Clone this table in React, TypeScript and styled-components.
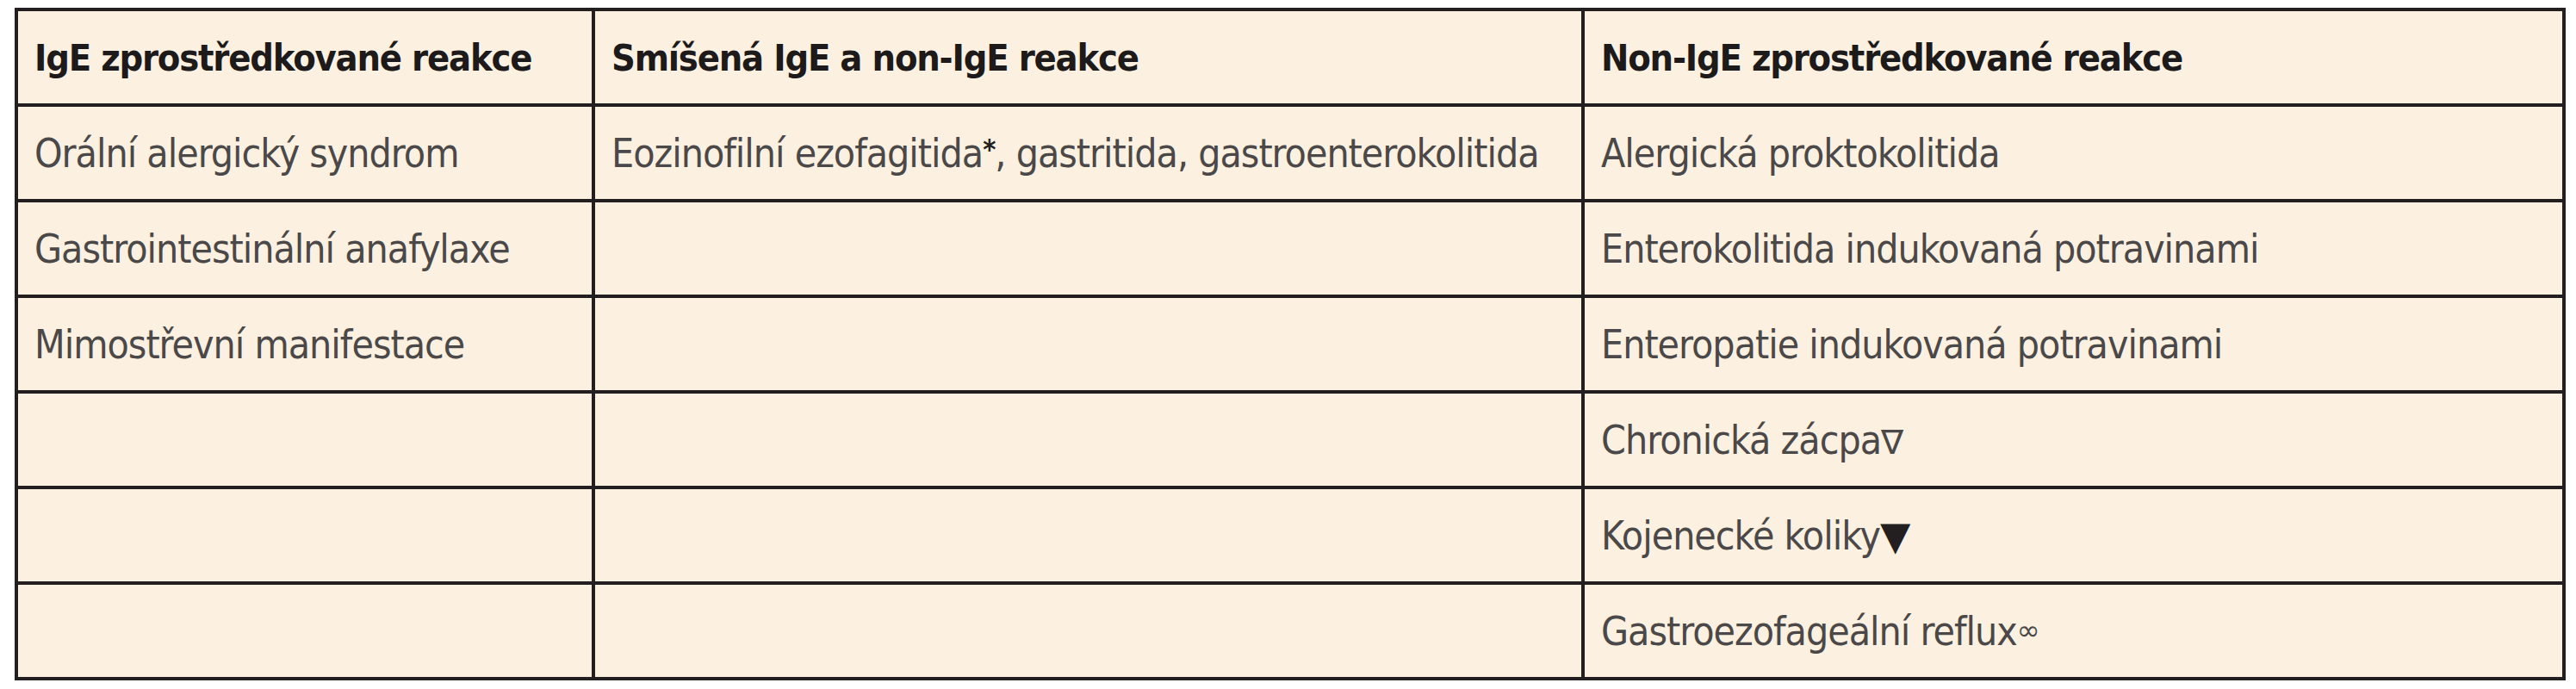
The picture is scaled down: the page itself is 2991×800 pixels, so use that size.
import React from 'react'
import styled, { createGlobalStyle } from 'styled-components'

const GlobalStyle = createGlobalStyle`
  html, body {
    margin: 0;
    padding: 0;
    background: #ffffff;
  }
`

const Page = styled.div`
  padding: 9px 12px 0 17px;
`

const Table = styled.table`
  width: 2962px;
  table-layout: fixed;
  border-collapse: collapse;
  background: #fcf0e0;
  font-family: 'DejaVu Sans Condensed', 'DejaVu Sans', sans-serif;

  tr {
    height: 111px;
  }
`

const HeadCell = styled.th`
  border: 4px solid #231f20;
  padding: 0 0 0 19px;
  text-align: left;
  vertical-align: middle;
  font-size: 43px;
  letter-spacing: -1.2px;
  font-weight: 700;
  color: #1c1a1a;
  white-space: nowrap;
`

const Cell = styled.td`
  border: 4px solid #231f20;
  padding: 0 0 0 19px;
  vertical-align: middle;
  font-size: 46px;
  letter-spacing: -1px;
  font-weight: 400;
  color: #4a4848;
  white-space: nowrap;
`

const Star = styled.span`
  font-weight: 700;
  color: #231f20;
  vertical-align: 0.3em;
  font-size: 0.7em;
`

const Mark = styled.span<{ $dark?: boolean }>`
  color: ${p => (p.$dark ? '#231f20' : '#4a4848')};
  font-family: 'DejaVu Sans', sans-serif;
  font-size: ${p => (p.$dark ? '1em' : '0.85em')};
  letter-spacing: 0;
`

const InfinityMark = styled.span`
  font-family: 'DejaVu Sans', sans-serif;
  font-size: 0.7em;
  vertical-align: 0.2em;
  letter-spacing: 0;
`

const headers = [
  'IgE zprostředkované reakce',
  'Smíšená IgE a non-IgE reakce',
  'Non-IgE zprostředkované reakce',
]

const rows: React.ReactNode[][] = [
  [
    'Orální alergický syndrom',
    <>
      Eozinofilní ezofagitida<Star>*</Star>, gastritida, gastroenterokolitida
    </>,
    'Alergická proktokolitida',
  ],
  ['Gastrointestinální anafylaxe', '', 'Enterokolitida indukovaná potravinami'],
  ['Mimostřevní manifestace', '', 'Enteropatie indukovaná potravinami'],
  ['', '', <>Chronická zácpa<Mark>∇</Mark></>],
  ['', '', <>Kojenecké koliky<Mark $dark>▼</Mark></>],
  ['', '', <>Gastroezofageální reflux<InfinityMark>∞</InfinityMark></>],
]

export default function App() {
  return (
    <>
      <GlobalStyle />
      <Page>
        <Table>
          <colgroup>
            <col style={{ width: 670 }} />
            <col style={{ width: 1149 }} />
            <col />
          </colgroup>
          <thead>
            <tr>
              {headers.map(h => (
                <HeadCell key={h}>{h}</HeadCell>
              ))}
            </tr>
          </thead>
          <tbody>
            {rows.map((row, i) => (
              <tr key={i}>
                {row.map((cell, j) => (
                  <Cell key={j}>{cell}</Cell>
                ))}
              </tr>
            ))}
          </tbody>
        </Table>
      </Page>
    </>
  )
}
